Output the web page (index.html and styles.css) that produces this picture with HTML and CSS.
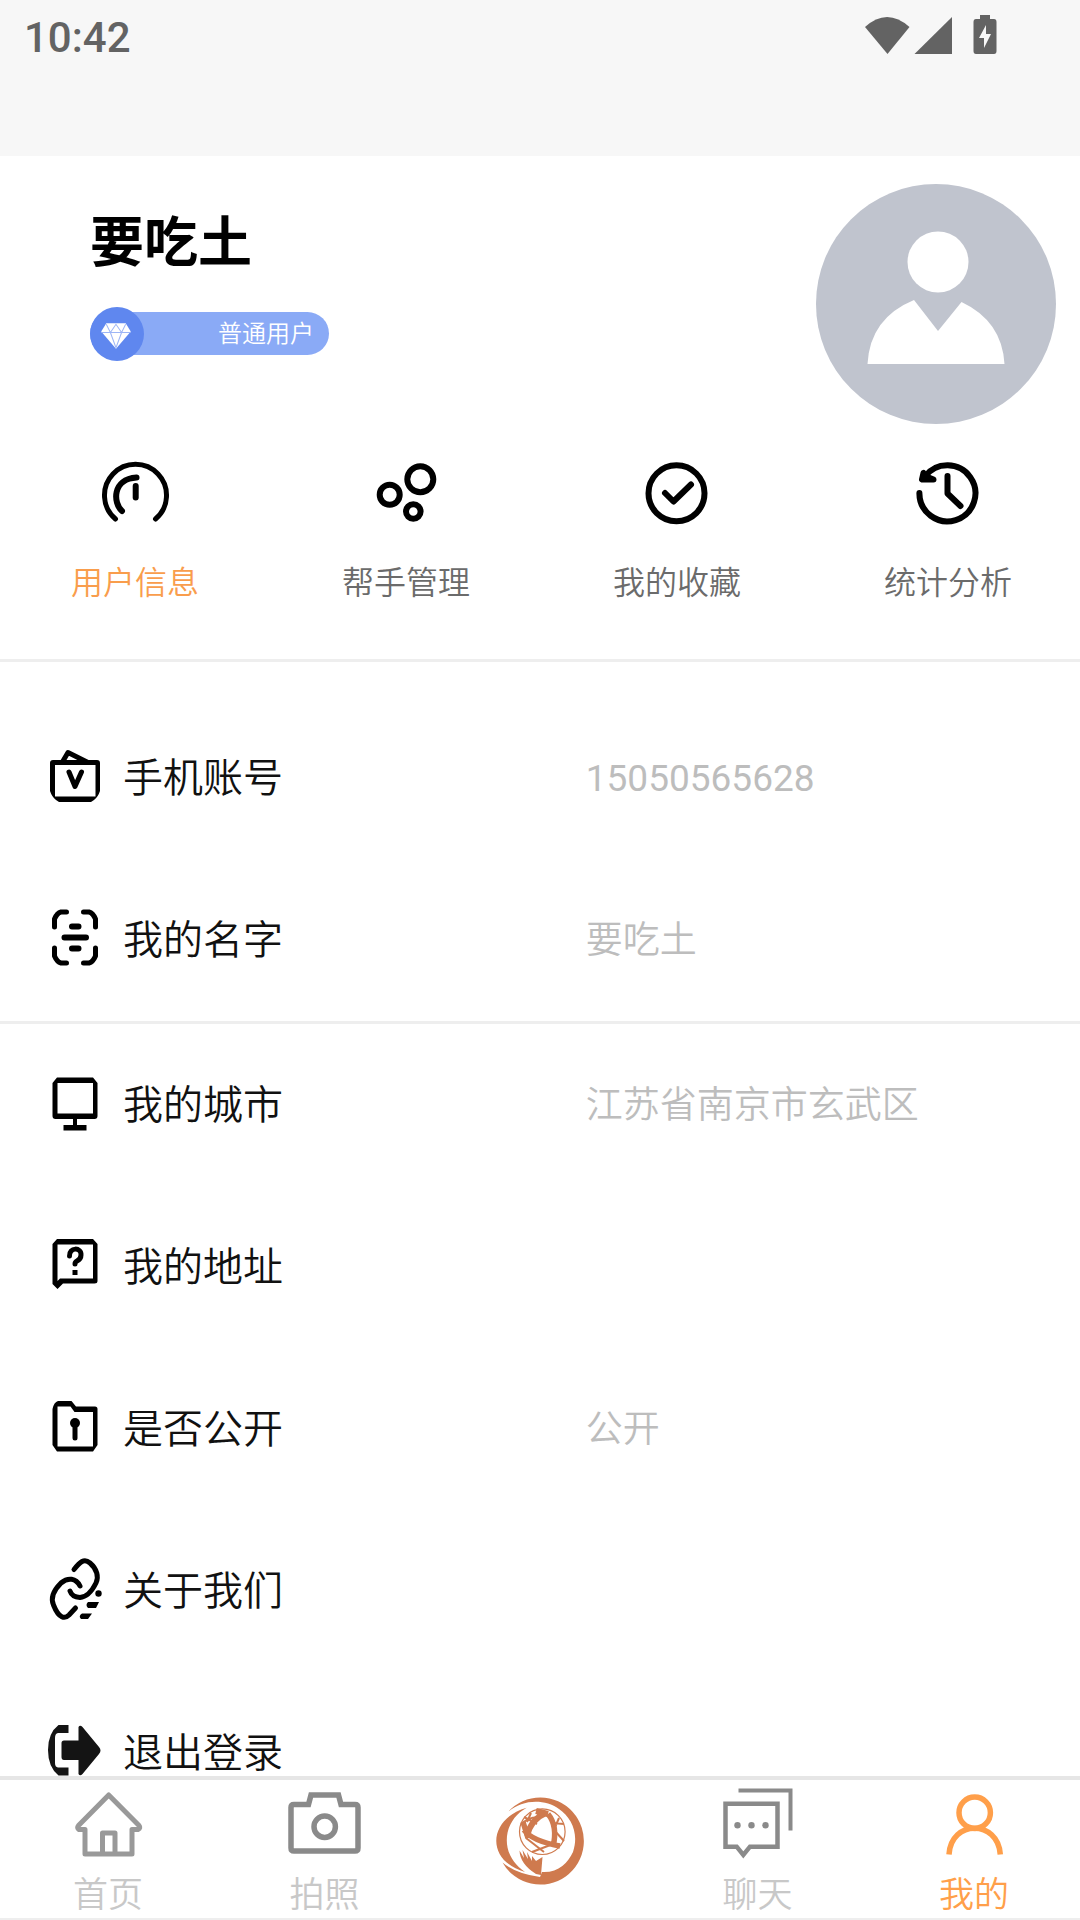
FILE: index.html
```html
<!DOCTYPE html>
<html lang="zh-CN">
<head>
<meta charset="utf-8">
<meta name="viewport" content="width=device-width, initial-scale=1">
<title>我的</title>
<link rel="stylesheet" href="styles.css">
</head>
<body>
<header class="status">
  <time class="status-time">10:42</time>
  <div class="status-icons" aria-hidden="true">
    <svg width="46" height="40" viewBox="0 0 46 40"><path d="M1 12Q23 -8 45.500 12L23.500 39Z"/></svg>
    <svg width="38" height="40" viewBox="0 0 38 40"><path d="M38 2V39H0.500Z"/></svg>
    <svg class="battery" width="24" height="40" viewBox="0 0 24 40"><path fill-rule="evenodd" d="M7 0H17V4H21Q23.500 4 23.500 7V36Q23.500 39 21 39H3Q0.500 39 0.500 36V7Q0.500 4 3 4H7ZM13 10L6 23H11V33L18 19H13Z"/></svg>
  </div>
</header>

<main class="content">
  <section class="profile">
    <div class="profile-text">
      <h1 class="name">要吃土</h1>
      <div class="badge">
        <svg width="54" height="54" viewBox="0 0 53 53" aria-hidden="true">
          <circle cx="26.500" cy="26.500" r="26.500" fill="#5f87ef"/>
          <path d="M16 16H35L40 24L25.500 41L11 24Z" fill="#fff"/>
          <path d="M11 25H40M16 17L20 25L25.500 17L31 25L35 17M20 25L25.500 40L31 25" fill="none" stroke="#9db5f6" stroke-width="1"/>
        </svg>
        <span>普通用户</span>
      </div>
    </div>
    <svg width="240" height="240" viewBox="0 0 240 240" role="img" aria-label="头像">
      <circle cx="120" cy="120" r="120" fill="#c0c4ce"/>
      <circle cx="122" cy="78" r="30.500" fill="#fff"/>
      <path d="M51.500 180Q54 134 98 116L122 147L145.500 118Q186 137 188.500 180Z" fill="#fff"/>
    </svg>
  </section>

  <div class="tabs">
    <button class="tab tab-on" type="button">
      <svg class="line" width="72" height="72" viewBox="0 -1 72 72"><path d="M16.500 62A31 31 0 1 1 56.500 62" stroke-width="5"/><path d="M37.500 20.500C13 22 14 46 23 54"/><path d="M36.700 29V40.500"/></svg>
      <span>用户信息</span>
    </button>
    <button class="tab" type="button">
      <svg class="line" width="72" height="72" viewBox="0 0 72 72"><circle cx="50.300" cy="23.300" r="13"/><circle cx="19.700" cy="38.700" r="10"/><circle cx="43.300" cy="55.500" r="7.300"/></svg>
      <span>帮手管理</span>
    </button>
    <button class="tab" type="button">
      <svg class="line" width="72" height="72" viewBox="0 0 72 72"><circle cx="35.500" cy="37.300" r="28"/><path d="M24 37L32.500 45.500L50 28.500"/></svg>
      <span>我的收藏</span>
    </button>
    <button class="tab" type="button">
      <svg class="line" width="72" height="72" viewBox="0 0 72 72"><path d="M7.400 37A28 28 0 1 0 13 20.500"/><path d="M11.500 17L10 23.500H21.500L13 20Z"/><path d="M35.500 20V37.500L48.500 50"/></svg>
      <span>统计分析</span>
    </button>
  </div>

  <nav class="group group-first" aria-label="账号">
    <a class="row" href="#phone">
      <svg width="60" height="60" viewBox="0 0 60 60"><path fill-rule="evenodd" d="M8 12H52Q55 12 55 15V43Q53 49 49 52L46 54H14L11 52Q7 49 5 43V15Q5 12 8 12ZM10 17V48.500H50.500V17Z"/><path class="line" d="M18 13L23 4.500L42 14" stroke-width="5"/><path class="line" d="M24 24L30 38.500L36.500 24" stroke-width="5"/></svg>
      <span class="row-label">手机账号</span><span class="row-value row-number">15050565628</span>
    </a>
    <a class="row" href="#name">
      <svg class="line" width="60" height="60" viewBox="0 0 60 60"><path stroke-width="5" d="M9.500 17V9Q12 3 16 2H21.500M38.500 2H44Q48 3 50.500 9V17M50.500 38V46Q48 52 44 53H38.500M21.500 53H16Q12 52 9.500 46V38"/><path d="M27 16.500H33.500M19.500 27.500H41M27 38.500H33.500"/></svg>
      <span class="row-label">我的名字</span><span class="row-value">要吃土</span>
    </a>
  </nav>

  <nav class="group" aria-label="资料">
    <a class="row" href="#city">
      <svg width="60" height="60" viewBox="0 0 60 60"><path fill-rule="evenodd" d="M12 2.500H48L52.500 8V41Q52.500 44 49.500 44H10.500Q7.500 44 7.500 41V8ZM12.500 8V38.500H48V8Z"/><path d="M28 43H32V50H41.500V55.500H18.500V50H28Z"/></svg>
      <span class="row-label">我的城市</span><span class="row-value">江苏省南京市玄武区</span>
    </a>
    <a class="row" href="#address">
      <svg width="60" height="60" viewBox="0 0 60 60"><path fill-rule="evenodd" d="M12 2H48L52.500 7V44Q52.500 46.500 49.500 46.500H18L12.500 52L7.500 47V7ZM12.500 7.500V44L15 41.500H48V7.500Z"/><path class="line" stroke-width="5" d="M24.500 19C24 10 36.500 10 36 18Q36 22 32 24Q30 25 30 27"/><path d="M27.500 33H32.500V38H27.500Z"/></svg>
      <span class="row-label">我的地址</span><span class="row-value"></span>
    </a>
    <a class="row" href="#visibility">
      <svg width="60" height="60" viewBox="0 0 60 60"><path fill-rule="evenodd" d="M13 2H26.500L31 7.500H50Q52.500 7.500 52.500 10V46L48 52.500H12L7.500 46V10Q9 3 13 2ZM12.500 7.500V47.500H48V13H29.500L25.500 7.500Z"/><circle cx="30" cy="24" r="5"/><path class="line" stroke-width="5" d="M30 25V39"/></svg>
      <span class="row-label">是否公开</span><span class="row-value">公开</span>
    </a>
    <a class="row" href="#about">
      <svg class="line" width="60" height="60" viewBox="0 0 60 60"><path stroke-width="5" d="M29 8.500C35 1 39 -3 45 2C52 8 54 16 51 22C47 30 42 36 35 36.500Q27 36 25 30M35 25C31 17 23 16 16 22C9 29 5 36 8.500 44C14 58 20 58 24 54L30.500 47"/><path stroke="none" fill="#000" d="M43 41H54L51 47H43Q40 44 43 41ZM37 52.500H47L43 58H36Q33 55 37 52.500Z"/><circle cx="53.500" cy="32.500" r="3.200" fill="#000" stroke="none"/></svg>
      <span class="row-label">关于我们</span><span class="row-value"></span>
    </a>
    <a class="row" href="#logout">
      <svg width="60" height="60" viewBox="0 0 60 60" fill="#141414"><path d="M23.500 2H13.500Q3 10 3 27T13.500 52.500H23.500V44.500H13Q10 44 10 40V15Q10 10.500 13 10H23.500Z"/><path d="M16.500 20Q16.500 17.500 19 17.500H33.500V4Q35 1.500 37.500 4L54 24Q57 27.500 54 31L37.500 51Q35 53.500 33.500 51V37H19Q16.500 37 16.500 34Z"/></svg>
      <span class="row-label">退出登录</span><span class="row-value"></span>
    </a>
  </nav>
</main>

<nav class="bottom" aria-label="主导航">
  <a class="item" href="#home">
    <svg width="72" height="72" viewBox="0 0 72 72" fill="none" stroke="#999" stroke-width="5" stroke-linejoin="round"><path d="M13 67V42.500H7Q4.500 41 6.500 38.500L36.700 8L67 38.500Q69 41 66 42.500H60V67Z"/><path d="M30.500 66V46H43V66"/></svg>
    <span>首页</span>
  </a>
  <a class="item" href="#camera">
    <svg width="72" height="72" viewBox="1 0 72 72" fill="none" stroke="#8a8a8a" stroke-width="5.500"><path d="M6 17.500H20.500L23 8H50.500L53 17.500H67Q70 17.500 70 20.500V61Q70 64 67 64H6Q3 64 3 61V20.500Q3 17.500 6 17.500Z"/><circle cx="36.700" cy="39.700" r="10.700"/></svg>
    <span>拍照</span>
  </a>
  <a class="item item-logo" href="#main" aria-label="主页">
    <svg width="90" height="90" viewBox="-2 -1 90 90" fill="#cf7a4e">
      <path d="M10 14A43.500 43.500 0 1 1 4.500 64.500Q18 76 42 79L44 74C60 75 70 65 75 54C81 36 74 20 61 11C47 1 25 1 10 14Z"/>
      <path d="M28.700 9.700C-9 20 -14 62 27 74C1 57 4 23 28.700 9.700Z"/>
      <g fill="none" stroke="#cf7a4e">
        <circle cx="44.300" cy="33.700" r="22.800" stroke-width="1.200"/>
        <path stroke-width="6" d="M38 13L50 16M48 15Q33 21 29 38"/>
        <path stroke-width="5.500" d="M50 16Q60 28 55 49M26 32Q34 43 62 48M25 24L30 40"/>
        <path stroke-width="2" d="M24 25Q34 18 41 20M26 19L39 26M61 20L55 34M54 25L66 26M56 32L66 43M28 40L46 54M55 46L34 54M33 15L29 24"/>
      </g>
      <path d="M21.500 52.500L26 60L24.500 52L30 61L29 54L34 63L34 58L38 63L44.500 59L43 77L38 76Q22 66 21.500 52.500Z"/>
    </svg>
  </a>
  <a class="item" href="#chat">
    <svg width="72" height="72" viewBox="2 0 72 72" fill="none" stroke="#8a8a8a" stroke-width="4.500"><path d="M5.500 16.700H57.500V59.700H30L23.300 68L16.700 59.700H5.500Z"/><path stroke-width="4" d="M18.500 3.500H70.500V43.500"/><g fill="#8a8a8a" stroke="none"><circle cx="17.500" cy="38.300" r="3.200"/><circle cx="31.500" cy="38.300" r="3.200"/><circle cx="45.500" cy="38.300" r="3.200"/></g></svg>
    <span>聊天</span>
  </a>
  <a class="item item-on" href="#me" aria-current="page">
    <svg width="72" height="72" viewBox="2 0 72 72" fill="none" stroke="#ff9f4a" stroke-width="5.500"><circle cx="38.700" cy="25.700" r="15.700"/><path d="M13 67.500C15 32.500 62 32.500 64.300 67.500"/></svg>
    <span>我的</span>
  </a>
</nav>
</body>
</html>
```

FILE: styles.css
```css
* { box-sizing: border-box; }

body {
  margin: 0;
  height: 100vh;
  display: flex;
  flex-direction: column;
  background: #fff;
  color: #111;
  font-family: Roboto, "Noto Sans CJK SC", sans-serif;
  font-weight: 350;
}

a { color: inherit; text-decoration: none; }
svg { display: block; flex: none; overflow: visible; }

.line {
  fill: none;
  stroke: #000;
  stroke-width: 6px;
  stroke-linecap: round;
  stroke-linejoin: round;
}
.line[stroke-width="5"] { stroke-width: 5px; }

.status {
  flex: none;
  height: 156px;
  padding: 15px 83px 0 24px;
  display: flex;
  justify-content: space-between;
  align-items: flex-start;
  background: #f7f7f7;
  color: #636363;
}
.status-time { font-size: 42px; line-height: 46px; font-weight: 500; }
.status-icons { display: flex; gap: 4px; fill: #636363; }
.battery { margin-left: 17px; }

.content { flex: 1; min-height: 0; overflow: auto; scrollbar-width: none; }

.profile {
  display: flex;
  justify-content: space-between;
  align-items: flex-start;
  padding: 28px 24px 32px 90px;
}
.profile-text { padding-top: 28px; }
.name { margin: 0 0 36px; font-size: 54px; line-height: 64px; color: #000; }
.badge {
  width: 239px;
  height: 43px;
  padding-right: 15px;
  display: flex;
  justify-content: space-between;
  align-items: center;
  border-radius: 22px;
  background: #8aaaf6;
  color: #fff;
  font-size: 24px;
  line-height: 32px;
}

.tabs {
  display: flex;
  justify-content: space-between;
  padding: 0 68px 54px 71px;
  border-bottom: 3px solid #eee;
}
.tab {
  display: flex;
  flex-direction: column;
  align-items: center;
  gap: 33px;
  padding: 0;
  border: 0;
  background: none;
  color: #6b6b6b;
  font-family: inherit;
  font-size: 32px;
  font-weight: inherit;
  line-height: 44px;
}
.tab-on { color: #f99d4c; }

.group-first { padding-top: 35px; border-bottom: 3px solid #eee; }
.row {
  height: 162px;
  padding-left: 45px;
  display: grid;
  grid-template-columns: 60px 9fr 10fr;
  column-gap: 18px;
  align-items: center;
}
.row-label { padding-top: 1px; font-size: 40px; line-height: 48px; }
.row-value { padding-top: 1px; font-size: 37px; line-height: 48px; color: #bdbdbd; }
.row-number { font-weight: 400; }

.bottom {
  flex: none;
  display: flex;
  justify-content: space-between;
  padding: 7px 61px 2px 63px;
  border-top: 4px solid #e6e6e6;
  border-bottom: 2px solid #eee;
  background: #fff;
  color: #c8c8c8;
}
.item {
  width: 90px;
  display: flex;
  flex-direction: column;
  align-items: center;
  gap: 17px;
  font-size: 35px;
  line-height: 40px;
}
.item-logo { padding-top: 10px; }
.item-on { color: #ff9f4a; }
```
